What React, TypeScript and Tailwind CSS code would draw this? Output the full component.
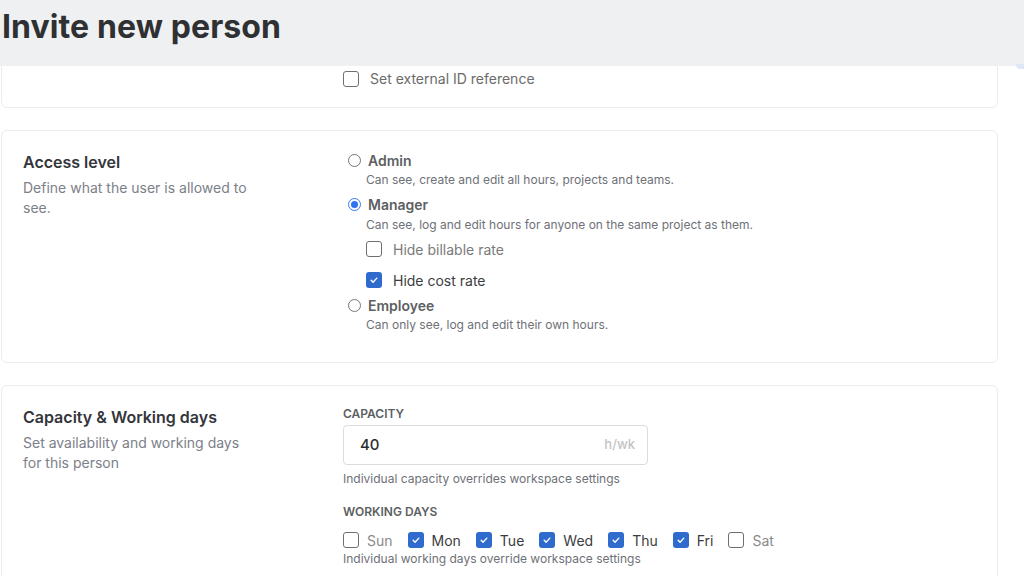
import React from "react";

const Check = () => (
  <svg viewBox="0 0 16 16" className="w-[10px] h-[10px]" fill="none" stroke="white" strokeWidth="2.2" strokeLinecap="round" strokeLinejoin="round">
    <path d="M3.5 8.5l3 3 6-6.5" />
  </svg>
);

function Box({ checked }: { checked?: boolean }) {
  return checked ? (
    <span className="w-4 h-4 rounded-[3px] bg-[#2f6bcc] flex items-center justify-center shrink-0">
      <Check />
    </span>
  ) : (
    <span className="w-4 h-4 rounded-[3px] border-[1.5px] border-[#6f6f6f] bg-white shrink-0" />
  );
}

function Radio({ checked }: { checked?: boolean }) {
  return checked ? (
    <span className="w-[13px] h-[13px] rounded-full border border-[#3a7bf0] flex items-center justify-center shrink-0 bg-white">
      <span className="w-[7px] h-[7px] rounded-full bg-[#2f74ee]" />
    </span>
  ) : (
    <span className="w-[13px] h-[13px] rounded-full border border-[#767676] bg-white shrink-0" />
  );
}

export default function App() {
  const days: [string, boolean][] = [
    ["Sun", false],
    ["Mon", true],
    ["Tue", true],
    ["Wed", true],
    ["Thu", true],
    ["Fri", true],
    ["Sat", false],
  ];
  return (
    <div className="w-[1024px] h-[576px] overflow-hidden bg-white relative" style={{ fontFamily: "Inter, 'Noto Sans', sans-serif" }}>
      <div className="absolute top-0 left-0 right-0 h-[66px] bg-[#eff0f2] z-10 flex items-center pl-[2px] pb-[12px]">
        <h1 className="text-[32px] font-bold text-[#2f3033] tracking-[0.1px]">Invite new person</h1>
      </div>
      <div className="absolute right-[0px] top-[64px] w-[8px] h-[5px] rounded-bl bg-[#dfe6f7] z-20" />
      <div className="flex flex-col gap-[22px] pl-[1px] w-[998px] pt-[20px]">
        {/* Card 1 */}
        <div className="border border-[#ececec] rounded-[6px] h-[88px] flex items-end pb-[18px]">
          <div className="w-[341px]" />
          <div className="flex items-center gap-[11px]">
            <Box />
            <span className="text-[14px] text-[#6b6b6b]">Set external ID reference</span>
          </div>
        </div>
        {/* Card 2 */}
        <div className="border border-[#ececec] rounded-[6px] h-[233px] flex pt-[20px]">
          <div className="w-[341px] pl-[21px]">
            <div className="text-[16px] font-semibold text-[#33353a] leading-[22px]">Access level</div>
            <div className="text-[14px] text-[#7c8088] leading-[20px] mt-[5px] w-[240px]">Define what the user is allowed to see.</div>
          </div>
          <div className="pl-[5px] pt-[0px] flex flex-col">
            <div className="flex items-center gap-[7px] h-[18px]">
              <Radio />
              <span className="text-[14px] font-semibold text-[#5d5f63]">Admin</span>
            </div>
            <div className="pl-[18px] text-[12px] text-[#6e7177] leading-[20px] mt-[1px]">Can see, create and edit all hours, projects and teams.</div>
            <div className="flex items-center gap-[7px] h-[18px] mt-[5px]">
              <Radio checked />
              <span className="text-[14px] font-semibold text-[#5d5f63]">Manager</span>
            </div>
            <div className="pl-[18px] text-[12px] text-[#6e7177] leading-[20px] mt-[2px]">Can see, log and edit hours for anyone on the same project as them.</div>
            <div className="pl-[18px] flex items-center gap-[11px] mt-[5px] h-[18px]">
              <Box />
              <span className="text-[14px] text-[#7a7a7a]">Hide billable rate</span>
            </div>
            <div className="pl-[18px] flex items-center gap-[11px] mt-[13px] h-[18px]">
              <Box checked />
              <span className="text-[14px] text-[#3c3d40]">Hide cost rate</span>
            </div>
            <div className="flex items-center gap-[7px] h-[18px] mt-[7px]">
              <Radio />
              <span className="text-[14px] font-semibold text-[#5d5f63]">Employee</span>
            </div>
            <div className="pl-[18px] text-[12px] text-[#6e7177] leading-[20px] mt-[1px]">Can only see, log and edit their own hours.</div>
          </div>
        </div>
        {/* Card 3 */}
        <div className="border border-[#ececec] rounded-[6px] h-[240px] flex pt-[20px]">
          <div className="w-[341px] pl-[21px]">
            <div className="text-[16px] font-semibold text-[#33353a] leading-[22px]">Capacity &amp; Working days</div>
            <div className="text-[14px] text-[#7c8088] leading-[20px] mt-[5px] w-[225px]">Set availability and working days for this person</div>
          </div>
          <div className="flex flex-col">
            <div className="text-[12px] font-semibold text-[#5d5f63] uppercase leading-[16px]">Capacity</div>
            <div className="mt-[3px] w-[305px] h-[40px] border border-[#dcdcdc] rounded-[4px] flex items-center justify-between pl-[16px] pr-[12px]">
              <span className="text-[15px] font-medium text-[#2c2d30]">40</span>
              <span className="text-[13px] font-medium text-[#c3c3c3]">h/wk</span>
            </div>
            <div className="text-[12px] text-[#6e7177] leading-[20px] mt-[4px]">Individual capacity overrides workspace settings</div>
            <div className="text-[12px] font-semibold text-[#5d5f63] uppercase leading-[16px] mt-[15px]">Working days</div>
            <div className="flex items-center gap-[15px] mt-[11px] h-[18px]">
              {days.map(([d, c]) => (
                <div key={d} className="flex items-center gap-[8px]">
                  <Box checked={c} />
                  <span className={"text-[14px] " + (c ? "text-[#3c3d40]" : "text-[#8a8a8a]")}>{d}</span>
                </div>
              ))}
            </div>
            <div className="text-[12px] text-[#6e7177] leading-[20px] mt-[0px]">Individual working days override workspace settings</div>
          </div>
        </div>
      </div>
    </div>
  );
}
